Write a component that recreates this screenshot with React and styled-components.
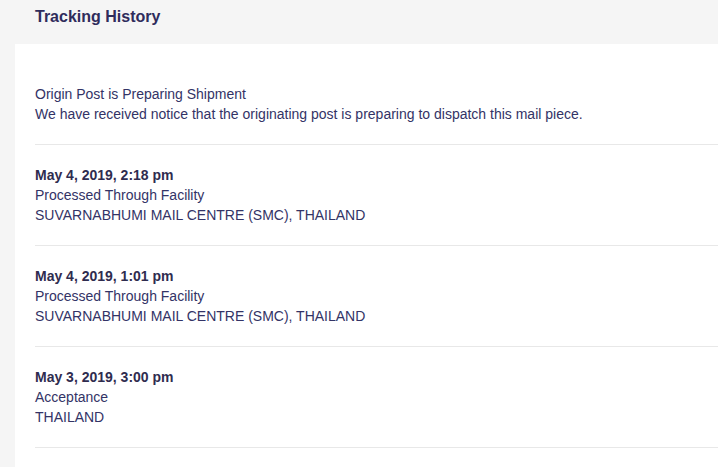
import React from 'react';
import styled, { createGlobalStyle } from 'styled-components';

const GlobalStyle = createGlobalStyle`
	html, body {
		margin: 0;
		padding: 0;
		background: #f5f5f5;
	}
	body {
		font-family: "Liberation Sans", Arial, sans-serif;
		color: #333366;
	}
`;

const Page = styled.div`
	width: 100%;
	height: 467px;
	overflow: hidden;
	background: #f5f5f5;
`;

const Header = styled.div`
	height: 44px;
	box-sizing: border-box;
	padding: 7px 0 0 35px;
`;

const Title = styled.h2`
	margin: 0;
	font-size: 16px;
	line-height: 20px;
	font-weight: bold;
	color: #2f2c5c;
`;

const Panel = styled.div`
	margin: 0 -40px 0 15px;
	background: white;
	padding: 20px 0 0 20px;
	min-height: 423px;
	box-sizing: border-box;
`;

const Event = styled.div`
	padding: 20px 0;
	border-bottom: 1px solid #e8e8e8;
`;

const Line = styled.div`
	font-size: 14px;
	line-height: 20px;
	font-weight: ${props => (props.bold ? 'bold' : 'normal')};
	color: ${props => (props.bold ? '#2f2c4f' : '#333366')};
`;

const events = [
	{
		lines: [
			'Origin Post is Preparing Shipment',
			'We have received notice that the originating post is preparing to dispatch this mail piece.'
		]
	},
	{
		date: 'May 4, 2019, 2:18 pm',
		lines: ['Processed Through Facility', 'SUVARNABHUMI MAIL CENTRE (SMC), THAILAND']
	},
	{
		date: 'May 4, 2019, 1:01 pm',
		lines: ['Processed Through Facility', 'SUVARNABHUMI MAIL CENTRE (SMC), THAILAND']
	},
	{
		date: 'May 3, 2019, 3:00 pm',
		lines: ['Acceptance', 'THAILAND']
	}
];

const App = () => (
	<Page>
		<GlobalStyle />
		<Header>
			<Title>Tracking History</Title>
		</Header>
		<Panel>
			{events.map((ev, i) => (
				<Event key={i}>
					{ev.date && <Line bold>{ev.date}</Line>}
					{ev.lines.map(l => (
						<Line key={l}>{l}</Line>
					))}
				</Event>
			))}
		</Panel>
	</Page>
);

export default App;
